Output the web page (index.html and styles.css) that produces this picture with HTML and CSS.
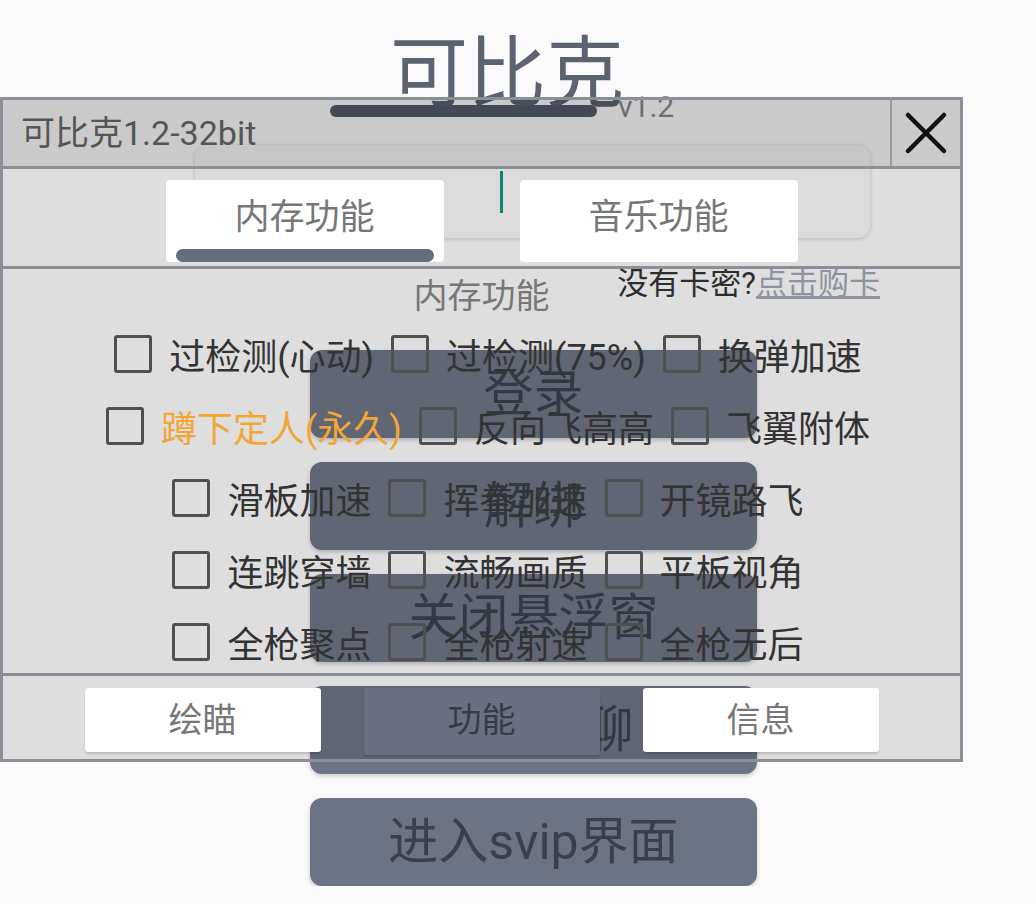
FILE: index.html
```html
<!DOCTYPE html>
<html lang="zh-CN">
<head>
  <meta charset="UTF-8" />
  <meta name="viewport" content="width=device-width, initial-scale=1.0" />
  <title>可比克</title>
  <link rel="stylesheet" href="styles.css">
</head>
<body>
<div class="app">
  <div class="brand">
    <span class="brand-name">可比克</span>
    <span class="brand-ver">v1.2</span>
    <div class="brand-bar"></div>
  </div>

  <div class="key-input"><span class="caret"></span></div>

  <div class="buy-row">没有卡密?<a href="#" class="buy-link">点击购卡</a></div>

  <div class="actions">
    <button class="btn-main">登录</button>
    <button class="btn-main">解绑</button>
    <button class="btn-main">关闭悬浮窗</button>
    <button class="btn-main">加入群聊</button>
    <button class="btn-main">进入svip界面</button>
  </div>
</div>

<!-- 悬浮窗 -->
<div class="float-win">
  <div class="win-head">
    <div class="win-title">可比克1.2-32bit</div>
    <button class="win-close" title="关闭">
      <svg width="46" height="46" viewBox="0 0 46 46"><path d="M5 5L41 41M41 5L5 41" stroke="#111" stroke-width="4.5" stroke-linecap="round"/></svg>
    </button>
  </div>

  <div class="top-tabs">
    <div class="top-tab active">内存功能<span class="tab-line"></span></div>
    <div class="top-tab">音乐功能</div>
  </div>

  <div class="panel">
    <div class="panel-title">内存功能</div>
    <div class="row">
      <label class="opt"><input type="checkbox" /><span>过检测(心动)</span></label>
      <label class="opt"><input type="checkbox" /><span>过检测(75%)</span></label>
      <label class="opt"><input type="checkbox" /><span>换弹加速</span></label>
    </div>
    <div class="row">
      <label class="opt"><input type="checkbox" /><span class="hot">蹲下定人(永久)</span></label>
      <label class="opt"><input type="checkbox" /><span>反向飞高高</span></label>
      <label class="opt"><input type="checkbox" /><span>飞翼附体</span></label>
    </div>
    <div class="row">
      <label class="opt"><input type="checkbox" /><span>滑板加速</span></label>
      <label class="opt"><input type="checkbox" /><span>挥拳加速</span></label>
      <label class="opt"><input type="checkbox" /><span>开镜路飞</span></label>
    </div>
    <div class="row">
      <label class="opt"><input type="checkbox" /><span>连跳穿墙</span></label>
      <label class="opt"><input type="checkbox" /><span>流畅画质</span></label>
      <label class="opt"><input type="checkbox" /><span>平板视角</span></label>
    </div>
    <div class="row">
      <label class="opt"><input type="checkbox" /><span>全枪聚点</span></label>
      <label class="opt"><input type="checkbox" /><span>全枪射速</span></label>
      <label class="opt"><input type="checkbox" /><span>全枪无后</span></label>
    </div>
  </div>

  <div class="bottom-tabs">
    <div class="bottom-tab">绘瞄</div>
    <div class="bottom-tab active">功能</div>
    <div class="bottom-tab">信息</div>
  </div>
</div>
</body>
</html>
```

FILE: styles.css
```css
body {
  margin: 0;
  background: #fafafa;
  font-family: Roboto, "Noto Sans CJK SC", sans-serif;
  color: #333;
  overflow: hidden;
}

/* 主界面 */
.app {
  width: 675px;
  margin-left: 195px;
  padding-top: 36px;
}
.brand {
  position: relative;
  display: flex;
  align-items: flex-end;
  height: 78px;
  padding-left: 195px;
}
.brand-name {
  font-size: 78px;
  line-height: 78px;
  color: #5b6270;
}
.brand-ver {
  font-size: 30px;
  line-height: 30px;
  color: #8a8a8a;
  margin: 0 0 -8px -6px;
}
.brand-bar {
  position: absolute;
  left: 135px;
  top: 69px;
  width: 267px;
  height: 12px;
  border-radius: 6px;
  background: #545c6a;
}
.key-input {
  display: flex;
  align-items: center;
  height: 93px;
  margin-top: 31px;
  padding-left: 305px;
  box-sizing: border-box;
  background: #f6f6f6;
  border-radius: 12px;
  box-shadow: 0 1px 4px rgba(0,0,0,0.18);
}
.caret {
  width: 3px;
  height: 42px;
  background: #1d8f80;
}
.buy-row {
  margin: 26px -10px 0 0;
  font-size: 31px;
  line-height: 40px;
  text-align: right;
  color: #333;
}
.buy-link {
  color: #a0a6b4;
  text-decoration: underline;
}
.actions {
  display: flex;
  flex-direction: column;
  gap: 24px;
  width: 447px;
  margin: 46px 0 0 115px;
}
.btn-main {
  height: 88px;
  padding: 0 0 10px;
  border: none;
  border-radius: 12px;
  background: #6c7383;
  color: #3a404b;
  font-family: Roboto, "Noto Sans CJK SC", sans-serif;
  font-size: 50px;
  box-shadow: 0 2px 4px rgba(0,0,0,0.2);
}

/* 悬浮窗 */
.float-win {
  position: absolute;
  left: 0;
  top: 97px;
  width: 963px;
  height: 665px;
  box-sizing: border-box;
  border: 3px solid #8b8f97;
  background: rgba(0,0,0,0.11);
  display: flex;
  flex-direction: column;
}
.win-head {
  display: flex;
  height: 69px;
  flex-shrink: 0;
  box-sizing: border-box;
  background: rgba(0,0,0,0.09);
  border-bottom: 3px solid #8b8f97;
}
.win-title {
  flex: 1;
  padding-left: 18px;
  font-size: 34px;
  line-height: 66px;
  color: #555;
}
.win-close {
  width: 70px;
  padding: 0;
  border: none;
  border-left: 2px solid #9a9a9a;
  background: transparent;
  display: flex;
  align-items: center;
  justify-content: center;
}
.top-tabs {
  display: flex;
  justify-content: center;
  gap: 76px;
  height: 100px;
  flex-shrink: 0;
  padding-top: 11px;
  box-sizing: border-box;
  border-bottom: 3px solid #8b8f97;
}
.top-tab {
  position: relative;
  width: 278px;
  height: 82px;
  background: #fff;
  border-radius: 4px;
  font-size: 35px;
  line-height: 76px;
  text-align: center;
  color: #777;
}
.tab-line {
  position: absolute;
  left: 10px;
  right: 10px;
  bottom: 0;
  height: 13px;
  border-radius: 7px;
  background: #656c7a;
}
.panel {
  height: 407px;
  flex-shrink: 0;
  padding: 3px 0 0 13px;
  box-sizing: border-box;
  overflow: hidden;
  border-bottom: 3px solid #8b8f97;
}
.panel-title {
  height: 46px;
  margin-left: -13px;
  font-size: 34px;
  line-height: 48px;
  text-align: center;
  color: #777;
}
.row {
  display: flex;
  justify-content: center;
  align-items: center;
  gap: 17px;
  height: 72px;
}
.opt {
  display: flex;
  align-items: center;
  gap: 17px;
  font-size: 36px;
  white-space: nowrap;
  color: #333;
}
.opt input {
  appearance: none;
  width: 38px;
  height: 38px;
  margin: 0;
  border: 3px solid #505050;
  border-radius: 3px;
  background: transparent;
}
.opt .hot {
  color: #f3a535;
}
.bottom-tabs {
  flex: 1;
  display: flex;
  justify-content: center;
  gap: 43px;
  padding-top: 12px;
  box-sizing: border-box;
}
.bottom-tab {
  width: 236px;
  height: 64px;
  background: #fff;
  border-radius: 3px;
  font-size: 34px;
  line-height: 64px;
  text-align: center;
  color: #777;
  box-shadow: 0 2px 2px rgba(0,0,0,0.15);
}
.bottom-tab.active {
  background: #6a7081;
  color: #363b45;
  height: 67px;
}
```
